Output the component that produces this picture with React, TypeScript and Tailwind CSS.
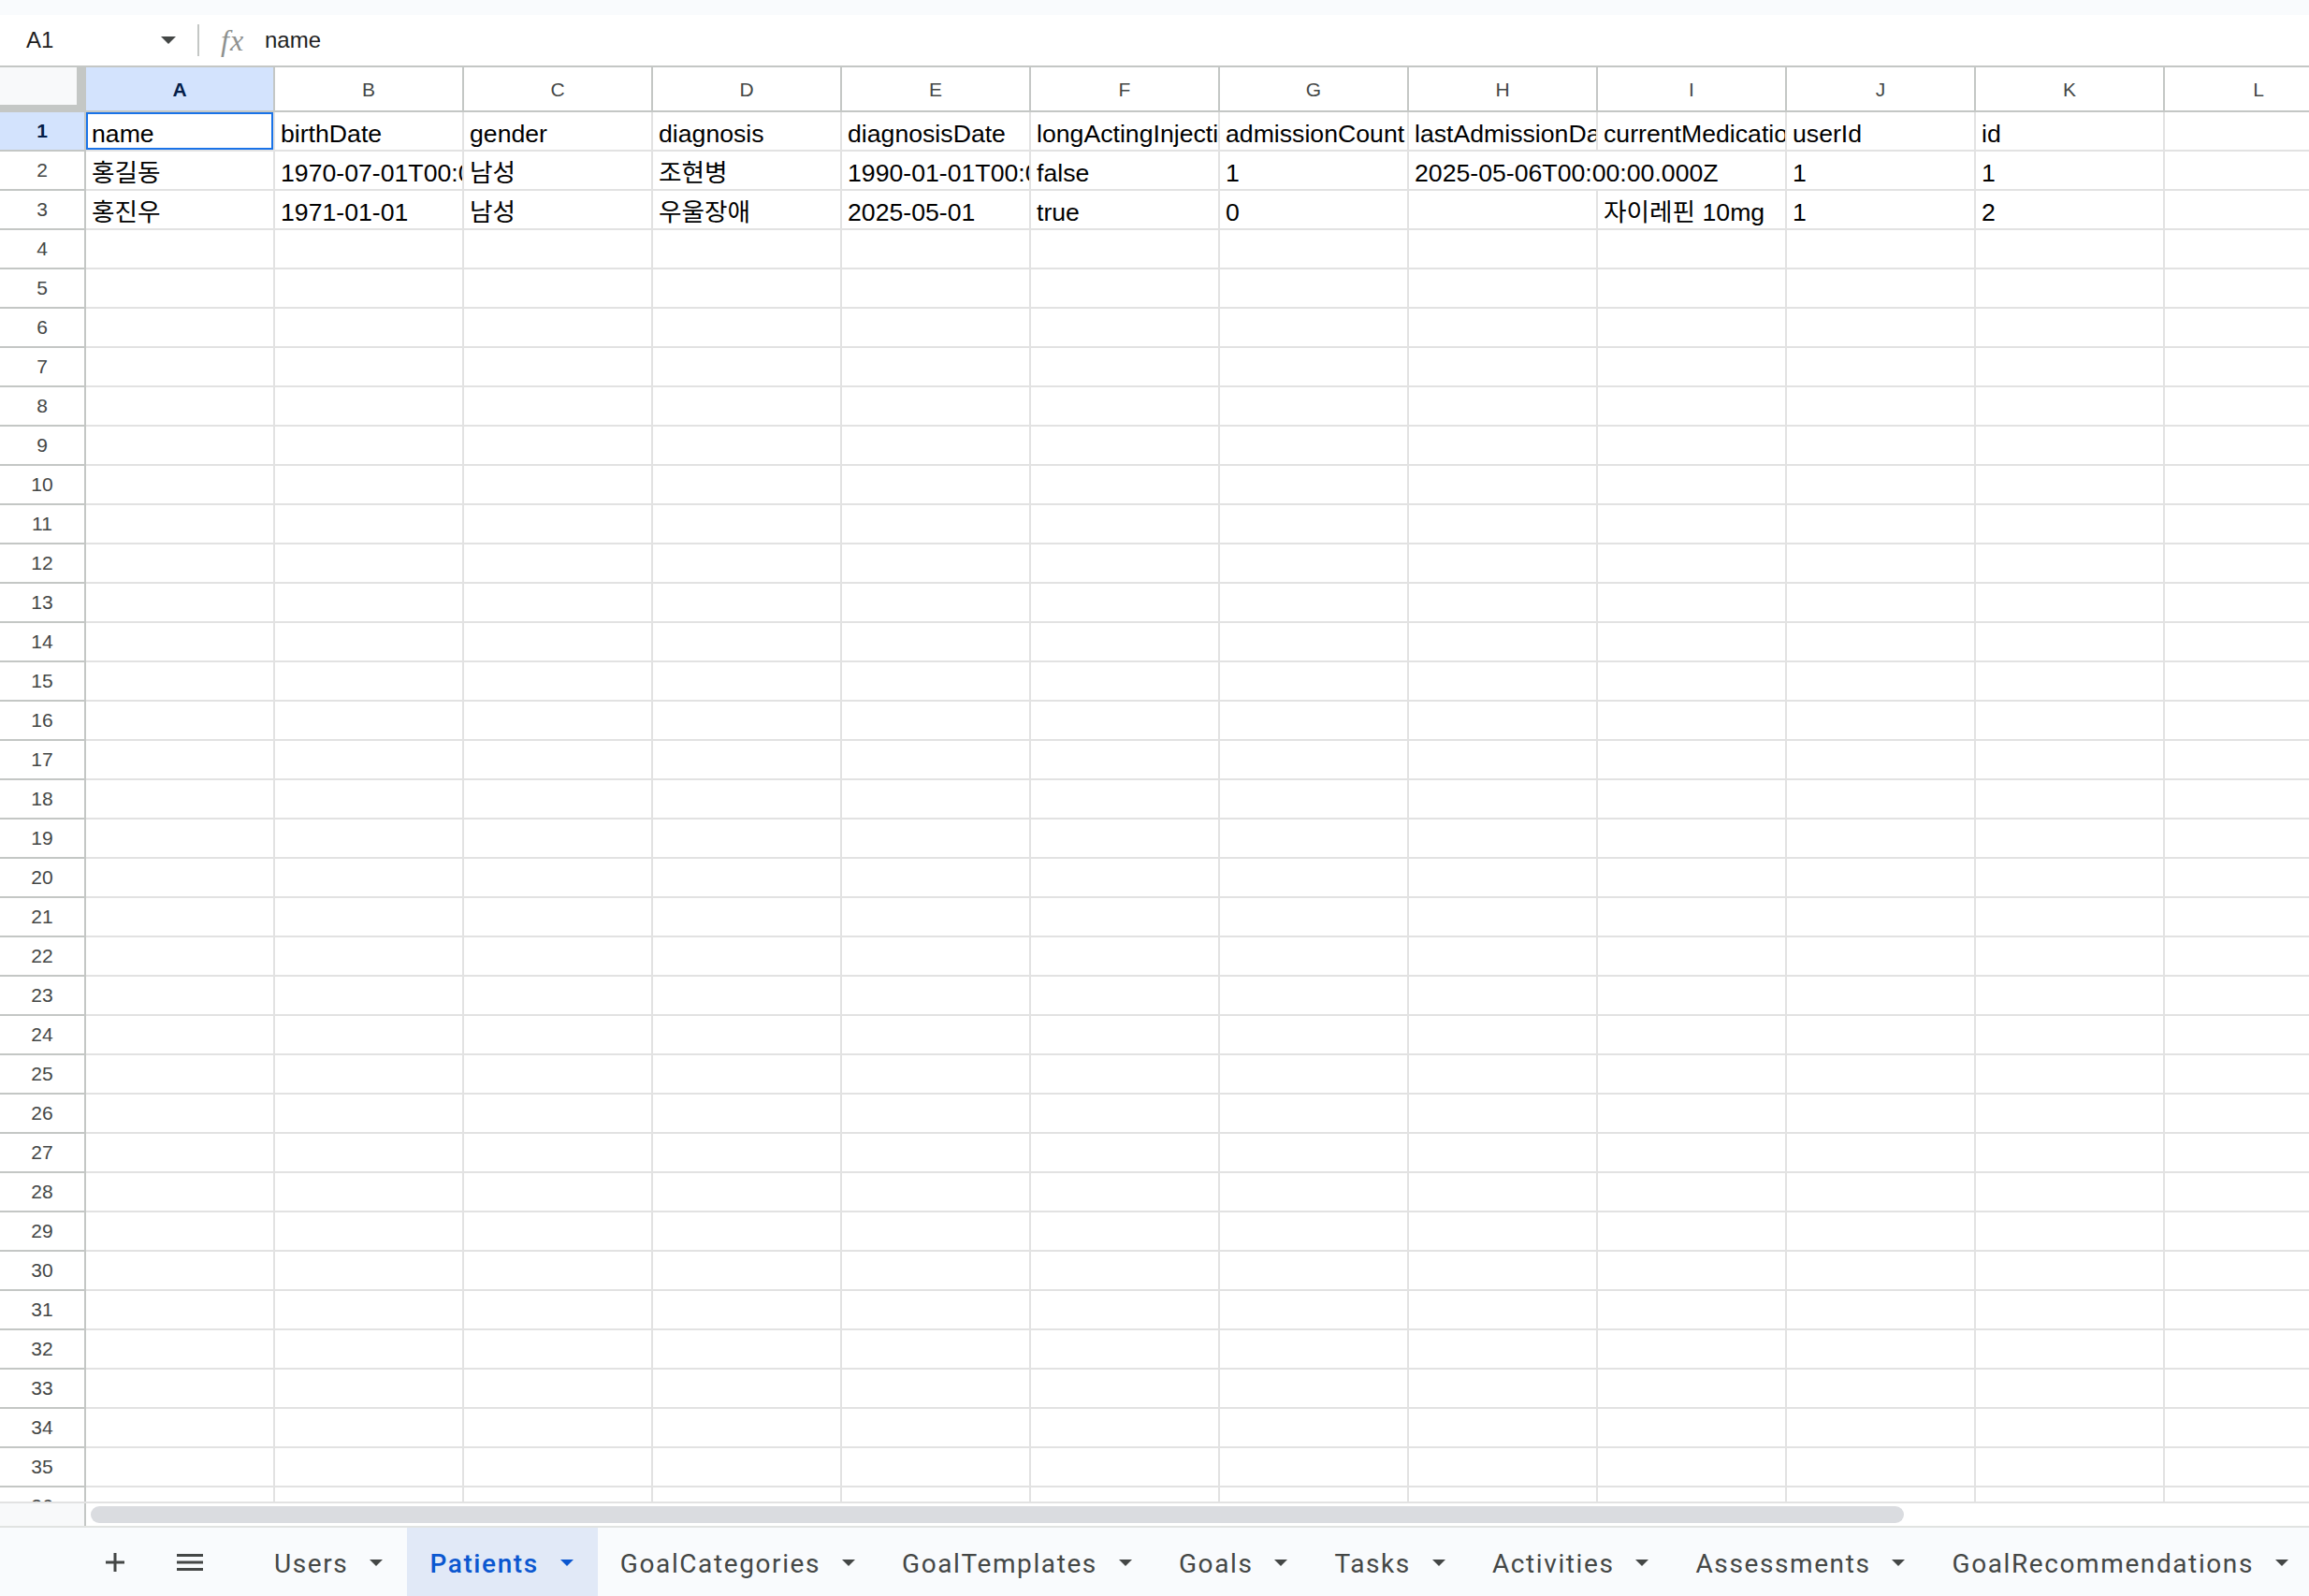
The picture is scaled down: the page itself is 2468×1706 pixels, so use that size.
const COLS = ["A", "B", "C", "D", "E", "F", "G", "H", "I", "J", "K", "L"];

const DATA: string[][] = [
  [
    "name",
    "birthDate",
    "gender",
    "diagnosis",
    "diagnosisDate",
    "longActingInjection",
    "admissionCount",
    "lastAdmissionDate",
    "currentMedication",
    "userId",
    "id",
    "",
  ],
  [
    "홍길동",
    "1970-07-01T00:00:00.000Z",
    "남성",
    "조현병",
    "1990-01-01T00:00:00.000Z",
    "false",
    "1",
    "2025-05-06T00:00:00.000Z",
    "",
    "1",
    "1",
    "",
  ],
  ["홍진우", "1971-01-01", "남성", "우울장애", "2025-05-01", "true", "0", "", "자이레핀 10mg", "1", "2", ""],
];

// cells whose text runs on into the empty cell to the right
const SPILL = new Set(["1-7"]);

const TABS = [
  "Users",
  "Patients",
  "GoalCategories",
  "GoalTemplates",
  "Goals",
  "Tasks",
  "Activities",
  "Assessments",
  "GoalRecommendations",
];

const ROW_COUNT = 36;

function Caret({ className }: { className: string }) {
  return (
    <svg width="14" height="7" viewBox="0 0 14 7" className={className}>
      <path d="M0 0h14L7 7z" fill="currentColor" />
    </svg>
  );
}

function FormulaBar() {
  return (
    <div className="flex h-[56px] shrink-0 items-center border-b-2 border-[#c4c7c5] bg-white">
      <div className="flex w-[211px] items-center pl-[28px] pr-[23px] text-[24px] text-[#1f1f1f]">
        <span>A1</span>
        <svg width="16" height="8" viewBox="0 0 16 8" className="ml-auto text-[#444746]">
          <path d="M0 0h16L8 8z" fill="currentColor" />
        </svg>
      </div>
      <div className="h-[34px] w-[2px] bg-[#c4c7c5]" />
      <span className="ml-[23px] w-[30px] font-['Liberation_Serif',serif] text-[32px] italic leading-none tracking-[1px] text-[#8e918f]">
        fx
      </span>
      <span className="ml-[17px] text-[24px] text-[#1f1f1f]">name</span>
    </div>
  );
}

function HeaderRow() {
  return (
    <div className="flex h-[48px] shrink-0">
      <div className="h-[48px] w-[92px] shrink-0 border-r-[10px] border-b-[8px] border-[#c4c7c5] bg-[#f8f9fa]" />
      {COLS.map((col) => {
        const active = col === "A";
        return (
          <div
            key={col}
            className={`flex h-[48px] w-[202px] shrink-0 items-center justify-center border-r-2 border-b-2 border-[#c4c7c5] pt-[2px] text-[21px] ${
              active ? "bg-[#d3e3fd] font-bold text-[#041e49]" : "bg-white text-[#444746]"
            }`}
          >
            {col}
          </div>
        );
      })}
    </div>
  );
}

function Row({ index }: { index: number }) {
  const values = DATA[index] ?? [];
  const selectedRow = index === 0;
  return (
    <div className="flex h-[42px] shrink-0">
      <div
        className={`flex h-[42px] w-[92px] shrink-0 items-center justify-center border-r-2 border-b-2 border-[#c4c7c5] text-[21px] ${
          selectedRow ? "bg-[#d3e3fd] font-bold text-[#041e49]" : "bg-white text-[#444746]"
        }`}
      >
        {index + 1}
      </div>
      {COLS.map((col, c) => {
        const text = values[c] ?? "";
        const spill = SPILL.has(`${index}-${c}`);
        return (
          <div
            key={col}
            className={`relative flex h-[42px] w-[202px] shrink-0 items-end border-b-2 border-[#e2e2e2] px-[6px] pb-[2px] text-[26.67px] leading-[30px] whitespace-nowrap text-black ${
              spill ? "z-10 overflow-visible" : "overflow-hidden border-r-2"
            }`}
          >
            {text}
            {selectedRow && c === 0 ? (
              <div className="absolute inset-0 border-2 border-[#1a73e8]" />
            ) : null}
          </div>
        );
      })}
    </div>
  );
}

function ScrollStrip() {
  return (
    <div className="flex h-[28px] shrink-0 border-t-2 border-b-2 border-t-[#e2e2e2] border-b-[#e1e3e1] bg-white">
      <div className="w-[92px] shrink-0 border-r-2 border-[#c4c7c5] bg-[#f8f9fa]" />
      <div className="ml-[5px] mt-[3px] h-[18px] w-[1938px] rounded-full bg-[#dadce0]" />
    </div>
  );
}

function SheetTabs() {
  return (
    <div className="flex h-[73px] shrink-0 items-stretch bg-[#f9fbfd] font-['Roboto',sans-serif] text-[28px] tracking-[1.6px]">
      <div className="flex w-[269px] shrink-0 items-center text-[#444746]">
        <svg width="20" height="20" viewBox="0 0 20 20" className="ml-[113px]">
          <path d="M10 0v20M0 10h20" stroke="currentColor" strokeWidth="3" />
        </svg>
        <svg width="28" height="18" viewBox="0 0 28 18" className="ml-[56px]">
          <path d="M0 1.5h28M0 9h28M0 16.5h28" stroke="currentColor" strokeWidth="3" />
        </svg>
      </div>
      {TABS.map((tab) => {
        const active = tab === "Patients";
        return (
          <div
            key={tab}
            className={`flex shrink-0 items-center pl-[24px] pr-[26px] pt-[5px] ${
              active ? "bg-[#e1e9f7] font-medium text-[#0b57d0]" : "text-[#444746]"
            }`}
          >
            <span>{tab}</span>
            <Caret className="ml-[23px] -mt-[3px]" />
          </div>
        );
      })}
    </div>
  );
}

export default function App() {
  return (
    <div className="flex h-[1706px] w-[2468px] flex-col overflow-hidden bg-white font-['Liberation_Sans','Noto_Sans_CJK_KR',sans-serif]">
      <div className="h-[16px] shrink-0 bg-[#f9fbfd]" />
      <FormulaBar />
      <div className="flex h-[1533px] shrink-0 flex-col overflow-hidden">
        <HeaderRow />
        {Array.from({ length: ROW_COUNT }, (_, i) => (
          <Row key={i} index={i} />
        ))}
      </div>
      <ScrollStrip />
      <SheetTabs />
    </div>
  );
}
